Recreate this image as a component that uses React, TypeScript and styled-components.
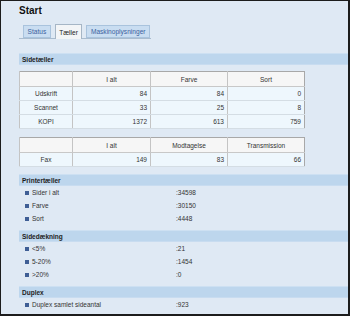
import React from "react";
import styled, { createGlobalStyle } from "styled-components";

const Global = createGlobalStyle`
  html, body { margin: 0; padding: 0; background: #dfe9f4; }
  body { font-family: "Liberation Sans", Arial, sans-serif; }
`;

const Frame = styled.div`
  box-sizing: border-box;
  width: 350px;
  height: 316px;
  overflow: hidden;
  border-top: 1px solid #1c1c1c;
  border-left: 1px solid #1c1c1c;
  border-right: 2px solid #1c1c1c;
  border-bottom: 2px solid #1c1c1c;
  background: #dfe9f4;
  padding: 4px 0 0 18px;
  color: #222;
`;

const Title = styled.h1`
  margin: 0;
  font-size: 10px;
  line-height: 12px;
  font-weight: bold;
  color: #111;
`;

const TabBar = styled.div`
  display: flex;
  align-items: flex-end;
  gap: 4px;
  width: 128px;
  padding-left: 4px;
  margin-top: 7px;
  height: 14px;
  border-bottom: 1px solid #a9bccf;
`;

const Tab = styled.div<{ $active?: boolean }>`
  box-sizing: border-box;
  height: ${(p) => (p.$active ? "15px" : "13px")};
  margin-bottom: ${(p) => (p.$active ? "-1px" : "0")};
  padding: 0 3.5px;
  display: flex;
  align-items: center;
  font-size: 6.6px;
  border: 1px solid ${(p) => (p.$active ? "#a6b6c6" : "#a9c3dd")};
  border-bottom: ${(p) => (p.$active ? "none" : "1px solid #a9c3dd")};
  background: ${(p) => (p.$active ? "#f3f5f7" : "#c9ddf1")};
  color: ${(p) => (p.$active ? "#222" : "#3b62a0")};
`;

const SectionHead = styled.div<{ $top: number }>`
  box-sizing: border-box;
  margin-top: ${(p) => p.$top}px;
  height: 12px;
  display: flex;
  align-items: center;
  padding-left: 3px;
  background: #bdd6ed;
  border-top: 1px solid #cde0f2;
  border-bottom: 1px solid #c8dcf0;
  font-size: 6.5px;
  font-weight: bold;
  color: #1d1d1d;
`;

const Table = styled.table<{ $top: number }>`
  margin-top: ${(p) => p.$top}px;
  width: 285px;
  border-collapse: collapse;
  table-layout: fixed;
  border: 1px solid #a8a8a8;
  font-size: 6.5px;
`;

const Th = styled.th`
  height: 14px;
  padding: 0;
  font-weight: normal;
  text-align: center;
  background: #f6f6f6;
  border-left: 1px solid #c4c4c4;
  border-bottom: 1px solid #c8c8c8;
  color: #333;
`;

const Td = styled.td<{ $label?: boolean }>`
  height: 13px;
  padding: 0 3px;
  text-align: ${(p) => (p.$label ? "center" : "right")};
  background: #eef7fd;
  border-left: 1px solid #c4c4c4;
  border-bottom: 1px solid #d4dde4;
  color: #333;
`;

const List = styled.div`
  display: flex;
  flex-direction: column;
`;

const Row = styled.div`
  display: grid;
  grid-template-columns: 151px 1fr;
  height: 13px;
  align-items: center;
  padding-left: 6px;
  font-size: 6.5px;
  color: #333;
`;

const Label = styled.span`
  display: flex;
  align-items: center;
  gap: 3px;
  &::before {
    content: "";
    width: 4px;
    height: 4px;
    background: #3f5e95;
  }
`;

const Value = styled.span``;

const t1 = [
  ["Udskrift", "84", "84", "0"],
  ["Scannet", "33", "25", "8"],
  ["KOPI", "1372", "613", "759"],
];

const Cols = () => (
  <colgroup>
    <col style={{ width: 53 }} />
    <col style={{ width: 78 }} />
    <col style={{ width: 77 }} />
    <col style={{ width: 77 }} />
  </colgroup>
);

const sections: { title: string; top: number; rows: [string, string][] }[] = [
  {
    title: "Printertæller",
    top: 7,
    rows: [
      ["Sider i alt", ":34598"],
      ["Farve", ":30150"],
      ["Sort", ":4448"],
    ],
  },
  {
    title: "Sidedækning",
    top: 5,
    rows: [
      ["<5%", ":21"],
      ["5-20%", ":1454"],
      [">20%", ":0"],
    ],
  },
  {
    title: "Duplex",
    top: 5,
    rows: [["Duplex samlet sideantal", ":923"]],
  },
];

export default function App() {
  return (
    <>
      <Global />
      <Frame>
        <Title>Start</Title>
        <TabBar>
          <Tab>Status</Tab>
          <Tab $active>Tæller</Tab>
          <Tab>Maskinoplysninger</Tab>
        </TabBar>
        <SectionHead $top={14}>Sidetæller</SectionHead>
        <Table $top={6}>
          <Cols />
          <thead>
            <tr>
              <Th></Th>
              <Th>I alt</Th>
              <Th>Farve</Th>
              <Th>Sort</Th>
            </tr>
          </thead>
          <tbody>
            {t1.map((r) => (
              <tr key={r[0]}>
                <Td $label>{r[0]}</Td>
                <Td>{r[1]}</Td>
                <Td>{r[2]}</Td>
                <Td>{r[3]}</Td>
              </tr>
            ))}
          </tbody>
        </Table>
        <Table $top={8}>
          <Cols />
          <thead>
            <tr>
              <Th></Th>
              <Th>I alt</Th>
              <Th>Modtagelse</Th>
              <Th>Transmission</Th>
            </tr>
          </thead>
          <tbody>
            <tr>
              <Td $label>Fax</Td>
              <Td>149</Td>
              <Td>83</Td>
              <Td>66</Td>
            </tr>
          </tbody>
        </Table>
        {sections.map((s) => (
          <React.Fragment key={s.title}>
            <SectionHead $top={s.top}>{s.title}</SectionHead>
            <List>
              {s.rows.map(([l, v]) => (
                <Row key={l}>
                  <Label>{l}</Label>
                  <Value>{v}</Value>
                </Row>
              ))}
            </List>
          </React.Fragment>
        ))}
      </Frame>
    </>
  );
}
